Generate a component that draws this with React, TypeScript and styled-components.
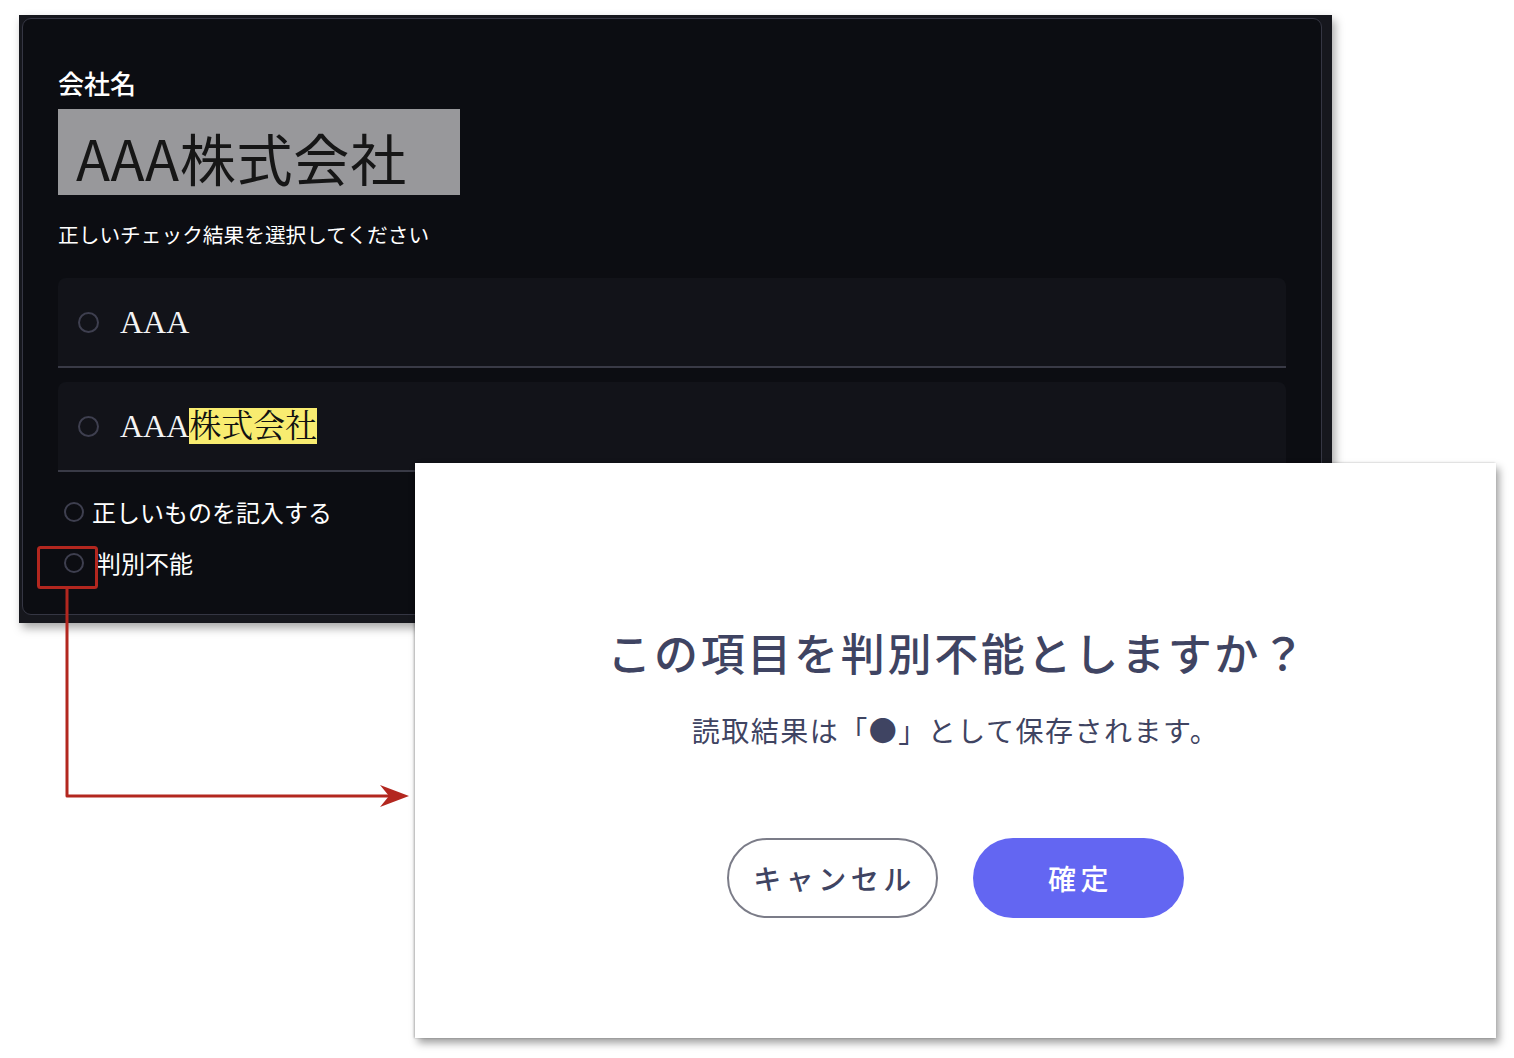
import styled, { createGlobalStyle } from "styled-components";

const GlobalStyle = createGlobalStyle`
  html, body {
    margin: 0;
    padding: 0;
    background: #ffffff;
  }
  body {
    font-family: "Noto Sans CJK JP", "Noto Sans", sans-serif;
  }
`;

const SANS = `"Noto Sans CJK JP", "Noto Sans", sans-serif`;
const SERIF = `"Liberation Serif", "Noto Serif CJK JP", "Noto Sans CJK JP", serif`;

const Canvas = styled.div`
  position: relative;
  width: 1514px;
  height: 1058px;
  overflow: hidden;
  background: #ffffff;
`;

// dark screenshot, placed on the canvas
const ScreenFrame = styled.div`
  position: absolute;
  left: 19px;
  top: 15px;
  width: 1313px;
  height: 608px;
  box-sizing: border-box;
  padding: 3px 10px 8px 3px;
  background: #16171d;
  box-shadow: 3px 5px 9px rgba(0, 0, 0, 0.35);
`;

const Card = styled.div`
  box-sizing: border-box;
  height: 100%;
  padding: 46px 35px 0 35px;
  background: #0c0d12;
  border: 1.5px solid #353643;
  border-radius: 9px;
  color: #ffffff;
  font-family: ${SANS};
`;

const FieldLabel = styled.div`
  font-size: 26px;
  line-height: 36px;
  font-weight: 500;
`;

const ScanImage = styled.div`
  width: 402px;
  height: 86px;
  margin-top: 8px;
  box-sizing: border-box;
  padding: 8px 0 0 18px;
  display: flex;
  align-items: center;
  background: #98989b;
  color: #161616;
  font-size: 56px;
  letter-spacing: 0.8px;
  filter: blur(0.4px);
`;

const Prompt = styled.div`
  margin-top: 24px;
  font-size: 20.7px;
  line-height: 30px;
`;

const OptionList = styled.div`
  margin-top: 29px;
  display: flex;
  flex-direction: column;
  gap: 14px;
`;

const OptionCard = styled.div`
  height: 90px;
  box-sizing: border-box;
  display: flex;
  align-items: center;
  padding-left: 20px;
  background: #121319;
  border-bottom: 2px solid #393a46;
  border-radius: 8px 8px 0 0;
`;

const Radio = styled.span<{ $size?: number }>`
  flex: none;
  width: ${(p) => p.$size ?? 21}px;
  height: ${(p) => p.$size ?? 21}px;
  box-sizing: border-box;
  border: 2px solid #3e3f4f;
  border-radius: 50%;
`;

const OptionText = styled.span`
  margin-left: 21px;
  font-family: ${SERIF};
  font-size: 32px;
  line-height: 1;
  color: #f4f4f4;
`;

const Marked = styled.span`
  background: #f8ec70;
  color: #111111;
`;

const ExtraList = styled.div`
  margin-top: 22px;
  margin-left: 6px;
  display: flex;
  flex-direction: column;
  gap: 16px;
`;

const ExtraRow = styled.div<{ $gap: number }>`
  display: flex;
  align-items: center;
  gap: ${(p) => p.$gap}px;
  font-size: 24px;
  line-height: 35px;
`;

// confirmation dialog, placed on the canvas
const Modal = styled.div`
  position: absolute;
  left: 415px;
  top: 463px;
  width: 1081px;
  height: 575px;
  box-sizing: border-box;
  padding-top: 161px;
  display: flex;
  flex-direction: column;
  align-items: center;
  background: #ffffff;
  box-shadow: 3px 5px 8px rgba(0, 0, 0, 0.38), -1px 0 2px rgba(0, 0, 0, 0.25);
  color: #3f4462;
  font-family: ${SANS};
`;

const ModalTitle = styled.div`
  font-size: 44px;
  line-height: 56px;
  font-weight: 500;
  letter-spacing: 2.7px;
  margin-left: 4px;
`;

const ModalText = styled.div`
  margin-top: 30px;
  font-size: 28px;
  line-height: 40px;
  letter-spacing: 1.5px;
`;

const ButtonRow = styled.div`
  margin-top: 88px;
  display: flex;
  gap: 35px;
`;

const Button = styled.button<{ $primary?: boolean }>`
  width: 211px;
  height: 80px;
  box-sizing: border-box;
  border-radius: 40px;
  border: ${(p) => (p.$primary ? "none" : "2px solid #7b7c88")};
  background: ${(p) => (p.$primary ? "#6366f2" : "#ffffff")};
  color: ${(p) => (p.$primary ? "#ffffff" : "#3f4462")};
  font-family: ${SANS};
  font-size: 28px;
  font-weight: 500;
  letter-spacing: 4.5px;
  padding: 0 0 0 4px;
  cursor: pointer;
`;

const Annotation = styled.svg`
  position: absolute;
  left: 0;
  top: 0;
  pointer-events: none;
`;

export default function App() {
  return (
    <>
      <GlobalStyle />
      <Canvas>
        <ScreenFrame>
          <Card>
            <FieldLabel>会社名</FieldLabel>
            <ScanImage>AAA株式会社</ScanImage>
            <Prompt>正しいチェック結果を選択してください</Prompt>
            <OptionList>
              <OptionCard>
                <Radio />
                <OptionText>AAA</OptionText>
              </OptionCard>
              <OptionCard>
                <Radio />
                <OptionText>
                  AAA<Marked>株式会社</Marked>
                </OptionText>
              </OptionCard>
            </OptionList>
            <ExtraList>
              <ExtraRow $gap={8}>
                <Radio $size={20} />
                正しいものを記入する
              </ExtraRow>
              <ExtraRow $gap={13}>
                <Radio $size={20} />
                判別不能
              </ExtraRow>
            </ExtraList>
          </Card>
        </ScreenFrame>

        <Modal>
          <ModalTitle>この項目を判別不能としますか？</ModalTitle>
          <ModalText>読取結果は「●」として保存されます。</ModalText>
          <ButtonRow>
            <Button>キャンセル</Button>
            <Button $primary>確定</Button>
          </ButtonRow>
        </Modal>

        <Annotation width="1514" height="1058" viewBox="0 0 1514 1058">
          <rect x="38.5" y="547.5" width="58" height="40" rx="2" fill="none" stroke="#b3271f" strokeWidth="3" />
          <path d="M67 589 V796 H392" fill="none" stroke="#b3271f" strokeWidth="3" strokeLinejoin="round" />
          <path d="M409 796 L380 785 L389 796 L380 807 Z" fill="#b3271f" />
        </Annotation>
      </Canvas>
    </>
  );
}
